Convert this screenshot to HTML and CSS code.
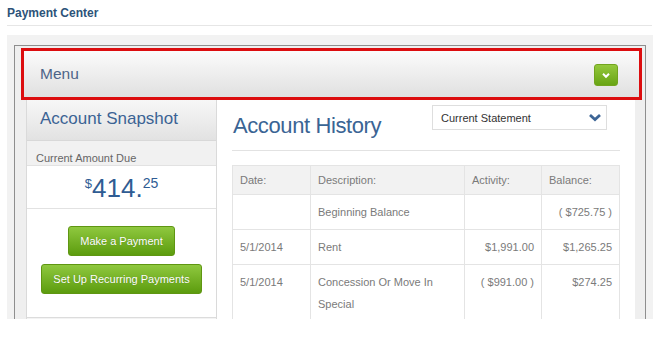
FILE: index.html
```html
<!DOCTYPE html>
<html lang="en">
<head>
  <meta charset="UTF-8">
  <meta name="viewport" content="width=device-width, initial-scale=1.0">
  <title>Payment Center</title>
  <link rel="stylesheet" href="styles.css">
</head>
<body>

  <h1 class="page-title">Payment Center</h1>

  <div class="frame">
    <div class="panel">

      <div class="menu-highlight">
        <div class="menu-bar">
          <span class="menu-label">Menu</span>
          <button class="menu-toggle" type="button">
            <svg width="10" height="7" viewBox="0 0 10 7"><polyline points="2,1.8 5,4.8 8,1.8" fill="none" stroke="#fff" stroke-width="2"/></svg>
          </button>
        </div>
      </div>

      <div class="content">
        <div class="snapshot">
          <div class="snapshot-header">Account Snapshot</div>
          <div class="snapshot-label">Current Amount Due</div>
          <div class="snapshot-amount"><span class="sup">$</span>414.<span class="sup cents">25</span></div>
          <div class="snapshot-actions">
            <button class="green-btn" type="button">Make a Payment</button>
            <button class="green-btn" type="button">Set Up Recurring Payments</button>
          </div>
          <div class="snapshot-footer"></div>
        </div>

        <div class="history">
          <div class="history-head">
            <h2 class="history-title">Account History</h2>
            <div class="statement-select">
              <span>Current Statement</span>
              <svg width="14" height="9" viewBox="0 0 14 9"><polyline points="2,2 7,6.5 12,2" fill="none" stroke="#3d6596" stroke-width="2.8"/></svg>
            </div>
          </div>

          <table class="history-table">
            <colgroup>
              <col class="col-date">
              <col class="col-desc">
              <col class="col-act">
              <col class="col-bal">
            </colgroup>
            <thead>
              <tr>
                <th>Date:</th>
                <th>Description:</th>
                <th>Activity:</th>
                <th>Balance:</th>
              </tr>
            </thead>
            <tbody>
              <tr>
                <td></td>
                <td>Beginning Balance</td>
                <td class="num"></td>
                <td class="num">( $725.75 )</td>
              </tr>
              <tr>
                <td>5/1/2014</td>
                <td>Rent</td>
                <td class="num">$1,991.00</td>
                <td class="num">$1,265.25</td>
              </tr>
              <tr>
                <td>5/1/2014</td>
                <td>Concession Or Move In Special</td>
                <td class="num">( $991.00 )</td>
                <td class="num">$274.25</td>
              </tr>
            </tbody>
          </table>
        </div>
      </div>

    </div>
  </div>

</body>
</html>
```

FILE: styles.css
```css
body {
  margin: 0;
  background-color: #fff;
  font-family: "Liberation Sans", Arial, sans-serif;
}
.page-title {
  margin: 0 20px 0 7px;
  padding: 6px 0 4px;
  font-size: 12px;
  line-height: 15px;
  font-weight: bold;
  color: #2d5379;
  border-bottom: 1px solid #e6e6e6;
}
.frame {
  margin: 9px 0 0 7px;
  width: 646px;
  height: 284px;
  box-sizing: border-box;
  padding: 10px 7px 0 7px;
  background-color: #f2f2f2;
  overflow: hidden;
}
.panel {
  height: 100%;
  border: 1px solid #8e8e8e;
  border-bottom: none;
  background-color: #efefef;
}
.menu-highlight {
  margin: 2px 3px 0 6px;
  border: 3px solid #dc0d0f;
}
.menu-bar {
  height: 46px;
  display: flex;
  align-items: center;
  justify-content: space-between;
  padding: 0 21px 0 16px;
  background: linear-gradient(#fbfbfb, #e0e0e0);
}
.menu-label {
  font-size: 15.5px;
  color: #4d6488;
}
.menu-toggle {
  width: 24px;
  height: 22px;
  padding: 0;
  border: 1px solid #72a41e;
  border-radius: 3px;
  background: linear-gradient(#94c83c, #68a414);
  display: flex;
  align-items: center;
  justify-content: center;
  margin-top: 2px;
}
.content {
  display: flex;
  margin: 0 10px 0 11px;
}
.snapshot {
  width: 191px;
  box-sizing: border-box;
  border: 1px solid #dadada;
  border-top: none;
  background-color: #fff;
}
.snapshot-header {
  height: 41px;
  padding-left: 13px;
  font-size: 17px;
  line-height: 37px;
  color: #3b6394;
  background: linear-gradient(#f7f7f7, #e2e2e2);
  border-bottom: 1px solid #d8d8d8;
  box-sizing: border-box;
}
.snapshot-label {
  height: 24px;
  padding-left: 9px;
  font-size: 11px;
  line-height: 34px;
  color: #666;
  background-color: #f1f1f1;
  box-sizing: border-box;
  overflow: hidden;
}
.snapshot-amount {
  height: 44px;
  text-align: center;
  font-size: 26px;
  line-height: 44px;
  color: #2f5c93;
  border-top: 1px solid #e2e2e2;
  border-bottom: 1px solid #e2e2e2;
  box-sizing: border-box;
}
.sup {
  font-size: 13px;
  line-height: 1;
  vertical-align: 9px;
}
.cents {
  font-size: 14px;
}
.snapshot-actions {
  display: flex;
  flex-direction: column;
  align-items: center;
  gap: 8px;
  padding: 17px 0 23px;
  border-bottom: 1px solid #dcdcdc;
}
.green-btn {
  font-family: "Liberation Sans", Arial, sans-serif;
  font-size: 11px;
  line-height: 14px;
  padding: 7px 11px;
  color: #fff;
  border: 1px solid #5f9612;
  border-radius: 3px;
  background: linear-gradient(#8fc83f, #5c9c0e);
  text-shadow: 0 0 1px rgba(0, 0, 0, 0.25);
}
.snapshot-footer {
  height: 10px;
  background-color: #f3f3f3;
}
.history {
  flex: 1;
  background-color: #fff;
  padding: 0 15px 0 15px;
}
.history-head {
  height: 51px;
  box-sizing: border-box;
  display: flex;
  justify-content: space-between;
  align-items: flex-start;
  border-bottom: 1px solid #e2e2e2;
}
.history-title {
  margin: 13px 0 0 1px;
  font-size: 22px;
  line-height: 26px;
  font-weight: normal;
  letter-spacing: -0.4px;
  color: #3a6494;
}
.statement-select {
  width: 175px;
  height: 25px;
  box-sizing: border-box;
  margin: 5px 13px 0 0;
  padding: 0 4px 0 8px;
  display: flex;
  align-items: center;
  justify-content: space-between;
  border: 1px solid #dedede;
  font-size: 11px;
  color: #333;
}
.history-table {
  margin-top: 14px;
  width: 100%;
  table-layout: fixed;
  border-collapse: collapse;
  font-size: 11px;
  color: #7a7a7a;
}
.col-date {
  width: 78px;
}
.col-desc {
  width: 154px;
}
.col-act {
  width: 77px;
}
.history-table th,
.history-table td {
  border: 1px solid #e4e4e4;
  padding: 6px 7px;
  line-height: 22px;
  text-align: left;
  vertical-align: top;
}
.history-table th {
  padding: 3px 7px;
  font-weight: normal;
  background-color: #f2f2f2;
}
.history-table td.num {
  text-align: right;
  padding-right: 7px;
}
```
